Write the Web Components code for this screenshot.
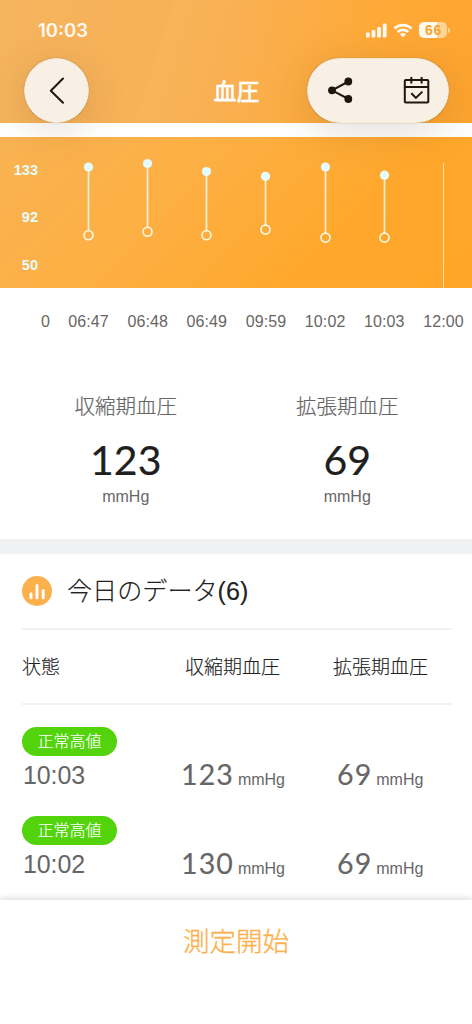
<!DOCTYPE html>
<html lang="ja">
<head>
<meta charset="utf-8">
<title>血圧</title>
<style>
  html, body { margin: 0; height: 100%; background: #fff; }
  body { overflow: hidden; font-family: "Liberation Sans", "Noto Sans CJK JP", sans-serif; color: #222; }
</style>
</head>
<body>
<bp-app></bp-app>
<script>
const define = (name, html, setup) => {
  const template = document.createElement('template');
  template.innerHTML = html;
  customElements.define(name, class extends HTMLElement {
    constructor() {
      super();
      this.attachShadow({ mode: 'open' }).append(template.content.cloneNode(true));
    }
    connectedCallback() {
      if (setup && !this.ready) { this.ready = true; setup(this, this.shadowRoot); }
    }
  });
};

define('status-bar', `
<style>
  :host { display: flex; align-items: center; justify-content: space-between; height: 58px; padding: 2px 22px 0 38px; box-sizing: border-box; color: #fffaf0; }
  time { font: 600 18.5px/22px Inter, sans-serif; letter-spacing: 0; }
  .icons { display: flex; align-items: center; gap: 6px; }
  svg { display: block; fill: currentColor; }
  .battery { display: flex; align-items: center; gap: 1px; }
  .level { width: 28px; height: 16px; border-radius: 5px; background: linear-gradient(90deg, #fffaf0 66%, #ffd596 66%); color: #f9a431; font: 700 14px/16px "Liberation Sans", sans-serif; letter-spacing: .8px; text-indent: 1px; text-align: center; }
  .tip { width: 2px; height: 5px; border-radius: 0 2px 2px 0; background: #ffd596; }
</style>
<time>10:03</time>
<div class="icons">
  <svg width="21" height="15" viewBox="0 0 21 15"><rect x="0" y="9.5" width="3.8" height="5" rx="1"/><rect x="5.6" y="7" width="3.8" height="7.5" rx="1"/><rect x="11.2" y="4" width="3.8" height="10.5" rx="1"/><rect x="16.8" y="0.5" width="3.8" height="14" rx="1"/></svg>
  <svg width="20" height="15" viewBox="0 0 20 15"><path d="M10 0.7c3.700 0 7 1.400 9.500 3.800l-1.900 2A11 11 0 0 0 10 3.400 11 11 0 0 0 2.400 6.500l-1.900-2A13.600 13.600 0 0 1 10 .7zM10 5.500c2.400 0 4.500.9 6.200 2.400l-1.900 2A6.300 6.300 0 0 0 10 8.200a6.300 6.300 0 0 0-4.300 1.700l-1.900-2A9.200 9.200 0 0 1 10 5.500zM10 10.100c1.200 0 2.200.4 3 1.200l-3 3.200-3-3.200c.8-.8 1.800-1.200 3-1.200z"/></svg>
  <div class="battery"><div class="level">66</div><div class="tip"></div></div>
</div>`);

define('glass-button', `
<style>
  :host { display: flex; align-items: center; box-sizing: border-box; height: 65px; border-radius: 33px; background: #f9f0e5; border: 1px solid #f7e9d5; color: #1e170e;
    box-shadow: 0 0 1px rgba(90,50,0,.6), 0 8px 40px rgba(80,60,25,.17); }
  ::slotted(svg) { display: block; fill: none; stroke: currentColor; }
</style>
<slot></slot>`);

define('nav-bar', `
<style>
  :host { display: grid; grid-template-columns: 142px 1fr 142px; align-items: center; height: 65px; padding: 0 23px 0 24px; }
  h1 { margin: 0 0 2px; color: #fff; font: 500 23px/30px "Noto Sans CJK JP", sans-serif; -webkit-text-stroke: .3px #fff; text-align: center; }
  .back { width: 65px; justify-content: center; }
  .tools { width: 142px; padding: 0 18px 2px 19px; justify-content: space-between; }
</style>
<glass-button class="back"><svg width="16" height="28" viewBox="0 0 16 28" stroke-width="2" stroke-linecap="round" stroke-linejoin="round"><path d="M14 1.500 L1.800 13.700 L14 25.700"/></svg></glass-button>
<h1>血圧</h1>
<glass-button class="tools">
  <svg width="26" height="26" viewBox="0 0 26 26" stroke-width="2"><path d="M21.500 4.500 L5 13.300 L21.500 22"/><g fill="#1e170e" stroke="none"><circle cx="21.300" cy="4.500" r="3.900"/><circle cx="5" cy="13.300" r="3.900"/><circle cx="21.300" cy="22" r="3.900"/></g></svg>
  <svg width="27" height="28" viewBox="0 0 27 28" stroke-width="2"><rect x="1.800" y="4" width="23.500" height="22.500" rx="1"/><path d="M1.800 11H25.300M8.300 1v6.500M18.600 1v6.500M8.300 17.300l4.600 4.600 6.500-6.300"/></svg>
</glass-button>`);

define('range-chart', `
<style>
  :host { display: block; }
  .plot { display: grid; grid-template-columns: 59px repeat(7, 59.15px); height: 151px; overflow: hidden; background: linear-gradient(135deg, #f9b353 0%, #fdaf42 38%, #ffa72b 72%, #ffa629 100%); }
  .scale { display: flex; flex-direction: column; justify-content: space-between; box-sizing: border-box; height: 135.5px; padding: 25px 21px 0 0; text-align: right; color: #e9fbfb; font: 700 14.5px/16px "Liberation Sans", sans-serif; }
  .range svg { display: block; width: 100%; height: 151px; }
  .edge { justify-self: center; width: 1px; height: 125px; margin-top: 26px; background: #ffe0a8; }
  .axis { display: grid; grid-template-columns: 59px repeat(7, 59.15px); padding-top: 25px; font-size: 16px; line-height: 18px; color: #666; text-align: center; overflow: hidden; letter-spacing: .1px; }
  .zero { text-align: right; padding-right: 9px; }
</style>
<div class="plot"><div class="scale"><span>133</span><span>92</span><span>50</span></div></div>
<div class="axis"><span class="zero">0</span></div>`, (host, root) => {
  const data = [['06:47', 30, 98.3], ['06:48', 26.5, 94.8], ['06:49', 34.6, 98.3], ['09:59', 39.3, 92.6], ['10:02', 30, 100.6], ['10:03', 38.2, 100.6]];
  const plot = root.querySelector('.plot'), axis = root.querySelector('.axis');
  for (const [label, high, low] of data) {
    plot.insertAdjacentHTML('beforeend', `<div class="range"><svg viewBox="0 0 59.15 151"><path d="M29.500 ${high}V${low - 4.5}" stroke="#f3efd8" stroke-width="1.700"/><circle cx="29.500" cy="${high}" r="4.600" fill="#e4fbff"/><circle cx="29.500" cy="${low}" r="4.500" fill="none" stroke="#f5fae9" stroke-width="1.600"/></svg></div>`);
    axis.insertAdjacentHTML('beforeend', `<span>${label}</span>`);
  }
  plot.insertAdjacentHTML('beforeend', '<div class="edge"></div>');
  axis.insertAdjacentHTML('beforeend', '<span>12:00</span>');
});

define('latest-value', `
<style>
  :host { display: flex; flex-direction: column; align-items: center; }
  .name { font: 300 20.5px/28px "Noto Sans CJK JP", sans-serif; color: #666; -webkit-text-stroke: .2px #666; }
  .value { margin-top: 13px; font: 400 41px/56px Lato, sans-serif; letter-spacing: 0; color: #1f1f1f; -webkit-text-stroke: .2px #1f1f1f; }
  .unit { font-size: 16px; line-height: 18px; color: #666; }
</style>
<slot class="name" name="name"></slot><div class="value"><slot></slot></div><span class="unit">mmHg</span>`);

define('section-title', `
<style>
  :host { display: flex; align-items: center; gap: 14px; height: 74px; border-bottom: 2px solid #f2f2f2; }
  h2 { margin: 0; font: 300 25.1px/36px "Liberation Sans", "Noto Sans CJK JP", sans-serif; color: #222; -webkit-text-stroke: .15px #222; }
</style>
<svg width="31" height="31" viewBox="0 0 31 31"><circle cx="15" cy="15" r="15" fill="#fcb04c"/><g stroke="#fff" stroke-width="3" stroke-linecap="round"><path d="M9 17.700v4M15 9.500V21.700M21.200 14.500V21.700"/></g></svg>
<h2><slot></slot></h2>`);

define('table-head', `
<style>
  :host { display: grid; grid-template-columns: 163px 148px 1fr; align-items: center; box-sizing: border-box; height: 75px; padding-bottom: 2px; border-bottom: 2px solid #f2f2f2; font: 300 19px/26px "Noto Sans CJK JP", sans-serif; color: #222; -webkit-text-stroke: .15px #222; }
</style>
<span>状態</span><span>収縮期血圧</span><span>拡張期血圧</span>`);

define('reading-row', `
<style>
  :host { display: grid; grid-template-columns: 159px 155px 1fr; height: 89px; }
  .state { display: flex; flex-direction: column; align-items: flex-start; }
  .badge { box-sizing: border-box; width: 95px; height: 29px; border-radius: 15px; background: #52d30c; color: #fff; text-align: center; font: 300 16px/26px "Noto Sans CJK JP", sans-serif; -webkit-text-stroke: .15px #fff; }
  .time { margin: 5px 0 0 1px; font-size: 25px; line-height: 29px; color: #666; letter-spacing: -.1px; }
  .number { padding-top: 29px; white-space: nowrap; color: #666; font-size: 16px; line-height: 36px; }
  b { font: 400 28.5px/36px Lato, sans-serif; letter-spacing: 1.1px; margin-right: 4px; -webkit-text-stroke: .15px #666; }
  .low { margin-left: 1px; }
</style>
<div class="state"><span class="badge">正常高値</span><span class="time"></span></div>
<div class="number"><b class="high"></b>mmHg</div>
<div class="number"><b class="low"></b>mmHg</div>`, (host, root) => {
  for (const key of ['time', 'high', 'low']) root.querySelector('.' + key).textContent = host.getAttribute(key);
});

define('start-bar', `
<style>
  :host { display: block; background: #fff; box-shadow: 0 -1px 7px rgba(0,0,0,.16); }
  button { display: block; width: 100%; padding: 21px 0 0; border: 0; background: none; color: #fcb04c; font: 300 26.5px/38px "Noto Sans CJK JP", sans-serif; text-align: center; -webkit-text-stroke: .3px #fcb04c; }
</style>
<button><slot></slot></button>`);

define('bp-app', `
<style>
  :host { display: flex; flex-direction: column; width: 472px; height: 1024px; overflow: hidden; background: #fff; }
  header { flex: none; height: 123px; margin-bottom: 14px; z-index: 1; background: linear-gradient(108deg, transparent 34%, rgba(255,190,110,.12) 34.3%, transparent 46%), linear-gradient(105deg, #f5b45f 0%, #f9b052 48%, #ffa936 78%, #fda42e 100%); }
  .latest { display: grid; grid-template-columns: 1fr 1fr; box-sizing: border-box; padding: 60px 14px 0 15px; height: 208px; flex: none; }
  .today { flex: 1; min-height: 0; overflow: hidden; border-top: 15px solid #f0f1f3; padding: 0 20px 0 22px; }
  .rows { padding-top: 22px; }
  start-bar { flex: none; height: 124px; z-index: 1; }
</style>
<header><status-bar></status-bar><nav-bar></nav-bar></header>
<range-chart></range-chart>
<section class="latest">
  <latest-value><span slot="name">収縮期血圧</span>123</latest-value>
  <latest-value><span slot="name">拡張期血圧</span>69</latest-value>
</section>
<section class="today">
  <section-title>今日のデータ(6)</section-title>
  <table-head></table-head>
  <div class="rows">
    <reading-row time="10:03" high="123" low="69"></reading-row>
    <reading-row time="10:02" high="130" low="69"></reading-row>
  </div>
</section>
<start-bar>測定開始</start-bar>`);
</script>
</body>
</html>
